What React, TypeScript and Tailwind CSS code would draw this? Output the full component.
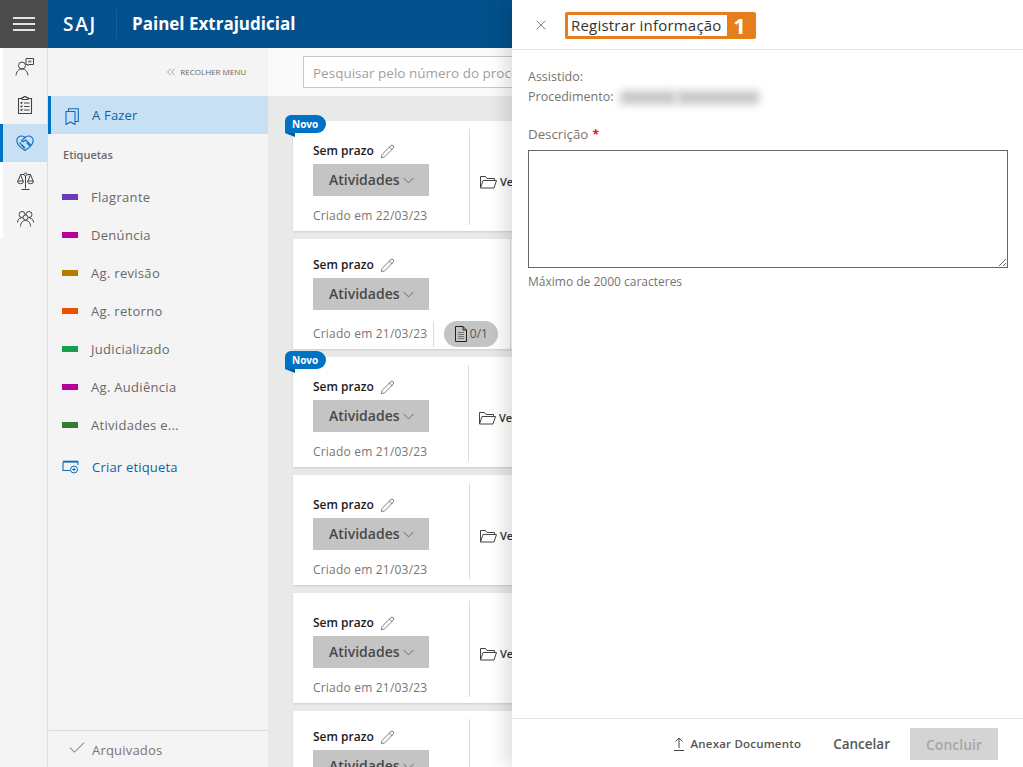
import React from "react";
import { ChevronDown, ChevronsLeft, Check, X, Pencil } from "lucide-react";

const labels = [
  ["Flagrante", "bg-[#6b3bb8]"],
  ["Denúncia", "bg-[#b4009e]"],
  ["Ag. revisão", "bg-[#b97a00]"],
  ["Ag. retorno", "bg-[#ea5000]"],
  ["Judicializado", "bg-[#16a04a]"],
  ["Ag. Audiência", "bg-[#b4009e]"],
  ["Atividades e...", "bg-[#2e7d32]"],
];

function PersonChat() {
  return (
    <svg width="20" height="20" viewBox="0 0 20 20" fill="none" stroke="#444" strokeWidth="1">
      <circle cx="7" cy="8.500" r="3.500" />
      <path d="M1 18.500c.3-3.600 2.600-6.500 6-6.500s5.700 2.900 6 6.500" />
      <path d="M11 1.500h7.500v6H14l-1 1.200V7.500h-2z" />
      <rect x="13" y="3.500" width="3.500" height="2" fill="#888" stroke="none" />
    </svg>
  );
}

function Clipboard() {
  return (
    <svg width="16" height="18" viewBox="0 0 16 18" fill="none" stroke="#444" strokeWidth="1.100">
      <path d="M5 2.500H1.500v15h13v-15H11" />
      <path d="M5 3.500V1.500h1.500a1.500 1 0 0 1 3 0H11v2z" />
      <path d="M3.500 6.500l1 1 1-1.500M3.500 10l1 1 1-1.500M3.500 13.500l1 1 1-1.500M7 7h5.500M7 10.500h5.500M7 14h5.500" />
    </svg>
  );
}

function Handshake() {
  return (
    <svg width="18" height="16" viewBox="0 0 18 16" fill="none" stroke="#0f6cbd" strokeWidth="1.100">
      <path d="M5.500 1C2.800 1 .8 3 .8 5.500c0 2.600 1.600 4.600 3.700 6.700L9 15.500l4.500-3.300c2.100-2.100 3.700-4.100 3.700-6.700C17.200 3 15.200 1 12.500 1 11 1 9.900 1.600 9 2.500 8.100 1.600 7 1 5.500 1z" />
      <path d="M9 2.500L5.500 5.800c.8 1 2 1 3 .2l1.300-1 5 5" />
      <path d="M3.500 7.500l5.500 5.500M5.500 10l3 3M10.500 7.500l3.500 3.500" />
    </svg>
  );
}

function Balance() {
  return (
    <svg width="17" height="18" viewBox="0 0 17 18" fill="none" stroke="#444" strokeWidth="1">
      <circle cx="8.500" cy="2.500" r="1.500" />
      <path d="M8.500 4v12.500M4.500 17.500h8M3.500 2.500H7M10 2.500h3.500" />
      <path d="M3.500 2.500L1 9M3.500 2.500L6 9M13.500 2.500L11 9M13.500 2.500L16 9" />
      <path d="M.5 9h6a3 2.800 0 0 1-6 0zM10.500 9h6a3 2.800 0 0 1-6 0z" />
    </svg>
  );
}

function People() {
  return (
    <svg width="17" height="16" viewBox="0 0 17 16" fill="none" stroke="#444" strokeWidth="1">
      <circle cx="5" cy="3.500" r="3" />
      <circle cx="12" cy="3.500" r="3" />
      <path d="M.5 11.500c0-2.500 1.500-4.500 4-4.500M16.500 11.500c0-2.500-1.500-4.500-4-4.500" />
      <circle cx="8.500" cy="6.500" r="2.500" fill="#f4f4f4" />
      <path d="M3.500 15.500c0-3.500 2-6 5-6s5 2.500 5 6" />
    </svg>
  );
}

function Bookmarks() {
  return (
    <svg width="14" height="17" viewBox="0 0 14 17" fill="none" stroke="#0f6cbd" strokeWidth="1.100">
      <path d="M1 3.500h9v13l-4.500-2.500L1 16.500z" />
      <path d="M3.500 3.500V.8h9.800v12.700H10" />
    </svg>
  );
}

function TagAdd() {
  return (
    <svg width="17" height="14" viewBox="0 0 17 14" fill="none" stroke="#0f6cbd" strokeWidth="1">
      <path d="M1 2h15v3M1 2v8.500h7" strokeWidth="1.100" />
      <path d="M1 1.500h15" strokeWidth="1.600" />
      <circle cx="12" cy="9.500" r="3.500" />
      <path d="M10.300 9.500h3.400M12 7.800v3.400" />
    </svg>
  );
}

function Folder() {
  return (
    <svg width="17" height="14" viewBox="0 0 17 14" fill="none" stroke="#444" strokeWidth="1">
      <path d="M.5 13V1.500h5l1.500 2h7.500v2" />
      <path d="M.5 13l2.500-7.500h13.500L14 13z" />
    </svg>
  );
}

function Doc() {
  return (
    <svg width="12" height="16" viewBox="0 0 12 16" fill="none" stroke="#222" strokeWidth="1">
      <path d="M.5.500h7.500l3.500 3.500v11.500H.5z" />
      <path d="M8 .5v3.500h3.500" />
      <path d="M3 6.500h6M3 8.500h6M3 10.500h6M3 12.500h6" stroke="#777" />
    </svg>
  );
}

function Upload() {
  return (
    <svg width="10" height="14" viewBox="0 0 10 14" fill="none" stroke="#444" strokeWidth="1">
      <path d="M5 11V1M1.500 4.500L5 1l3.500 3.500M0 13.500h10" />
    </svg>
  );
}

function Rail({ active, children }: { active?: boolean; children: React.ReactNode }) {
  return (
    <div className={`h-[38px] flex items-center justify-center border-l-[3px] ${active ? "border-[#0072c6] bg-[#c7e0f4]" : "border-white"}`}>
      {children}
    </div>
  );
}

function Card({ novo, tall, shift, second, date = "21/03/23" }: { novo?: boolean; tall?: boolean; shift?: boolean; second?: boolean; date?: string }) {
  return (
    <div className="relative shrink-0 h-[110px] bg-white shadow-[0_1px_2px_rgba(0,0,0,0.12)] flex">
      {novo && (
        <div className="absolute left-[-8px] top-[-6px]">
          <div className="h-[18px] w-[41px] bg-[#0072c6] rounded-tl-[6px] rounded-r-[9px] text-white text-[10px] font-bold leading-[18px] pl-[7px]">Novo</div>
          <div className="w-0 h-0 border-t-[4px] border-l-[10px] border-t-[#005a9e] border-l-transparent" />
        </div>
      )}
      <div className={`flex flex-col pl-5 pb-[5px] ${tall ? "pt-4" : "pt-5"} ${second ? "w-[218px] border-r border-[#dcdcdc]" : shift ? "w-[175px]" : "w-[176px]"}`}>
        <div className="h-5 flex items-center gap-[6px] text-[12px] font-semibold text-[#1b1b1b]">
          Sem prazo <Pencil size={15} strokeWidth={1} className="text-[#333]" />
        </div>
        <div className="mt-[3px] w-[116px] h-8 bg-[#c4c4c4] flex items-center pl-4 pb-[2px] text-[14px] font-semibold text-[#484848] shrink-0">
          Atividades <ChevronDown size={19} strokeWidth={1} className="ml-[-1px] mt-[2px] text-[#555]" />
        </div>
        <div className="mt-auto h-5 flex items-center text-[12px] tracking-[0.2px] text-[#7a7574] whitespace-nowrap">
          Criado em {date}
          {second && (
            <div className="flex items-center ml-[6px] tracking-normal">
              <div className="h-[26px] w-px bg-[#dcdcdc]" />
              <div className="ml-[10px] h-[26px] w-[54px] rounded-full bg-[#c4c4c4] flex items-center justify-center gap-[3px] text-[#555]">
                <Doc />0/1
              </div>
            </div>
          )}
        </div>
      </div>
      {!second && (
        <div className={`my-2 flex items-center gap-[3px] border-l border-[#dcdcdc] pl-[10px] h-[96px] text-[11px] font-semibold text-[#333] ${tall ? "pt-[16px]" : "pt-[10px]"}`}>
          <Folder /> Ver
        </div>
      )}
    </div>
  );
}

export default function App() {
  return (
    <div className="relative h-[767px] w-[1023px] overflow-hidden flex flex-col bg-[#f4f4f4] font-['Open_Sans',sans-serif]">
      <header className="h-12 shrink-0 bg-[#03508c] flex items-center text-white">
        <div className="w-12 h-12 bg-[#4b4b4b] flex flex-col items-center justify-center gap-[4px]">
          <div className="w-[22px] h-[2px] bg-[#e4e4e4]" />
          <div className="w-[22px] h-[2px] bg-[#e4e4e4]" />
          <div className="w-[22px] h-[2px] bg-[#e4e4e4]" />
        </div>
        <div className="ml-[15px] text-[19px] font-semibold tracking-[1.800px] w-[38px]">SAJ</div>
        <div className="ml-[15px] w-px h-[30px] bg-[#0f62a5]" />
        <div className="ml-[15px] text-[17px] font-bold">Painel Extrajudicial</div>
      </header>

      <div className="flex-1 flex min-h-0">
        <nav className="w-12 shrink-0 border-r border-[#dcdcdc] bg-[#f4f4f4]">
          <Rail><PersonChat /></Rail>
          <Rail><Clipboard /></Rail>
          <Rail active><Handshake /></Rail>
          <Rail><Balance /></Rail>
          <Rail><People /></Rail>
        </nav>

        <aside className="w-[220px] shrink-0 flex flex-col bg-[#f4f4f4]">
          <div className="h-12 flex items-center justify-end gap-[2px] pr-[22px] text-[8px] text-[#666]">
            <ChevronsLeft size={14} strokeWidth={1} /> RECOLHER MENU
          </div>
          <div className="h-[38px] flex items-center border-l-[3px] border-[#0072c6] bg-[#c7e0f4] pl-[14px] pt-[2px] text-[13px] tracking-[0.2px] text-[#0f5fa8]">
            <Bookmarks /> <span className="ml-[13px]">A Fazer</span>
          </div>
          <div className="mt-[12px] pl-[15px] text-[11px] font-semibold text-[#6f6a68] h-[18px] flex items-center">Etiquetas</div>
          <div className="mt-[14px] flex flex-col">
            {labels.map(([name, color]) => (
              <div key={name} className="h-[38px] flex items-center pl-[14px] text-[13px] tracking-[0.3px] text-[#6b6866]">
                <div className={`w-4 h-[6px] ${color}`} />
                <span className="ml-[13px] mt-[2px]">{name}</span>
              </div>
            ))}
          </div>
          <div className="mt-[4px] h-[38px] flex items-center pl-[14px] text-[13px] tracking-[0.2px] text-[#0f5fa8]">
            <TagAdd /> <span className="ml-[13px] mt-[2px]">Criar etiqueta</span>
          </div>
          <div className="mt-auto h-[37px] ml-px border-t border-[#dcdcdc] flex items-center pl-[18px] text-[13px] tracking-[0.2px] text-[#7a7574]">
            <Check size={20} strokeWidth={1} className="text-[#444] mt-[-3px]" /> <span className="ml-[5px] mt-[3px]">Arquivados</span>
          </div>
        </aside>

        <main className="flex-1 min-w-0 bg-[#e9e9e9] overflow-hidden flex flex-col">
          <div className="h-12 shrink-0 bg-[#fafafa] flex items-center pl-[35px]">
            <div className="w-[600px] h-8 border border-[#c8c8c8] bg-white flex items-center pl-[9px] pt-[2px] text-[13.500px] text-[#a19f9d] whitespace-nowrap">
              Pesquisar pelo número do processo
            </div>
          </div>
          <div className="flex flex-col gap-2 pt-[25px] pl-[25px]">
            <Card novo date="22/03/23" />
            <Card tall second />
            <Card novo shift />
            <Card />
            <Card />
            <Card tall />
          </div>
        </main>
      </div>

      <section className="absolute right-0 top-0 bottom-0 w-[511px] bg-white shadow-[-8px_0_16px_rgba(0,0,0,0.12)] flex flex-col">
        <div className="h-[50px] shrink-0 border-b border-[#e6e6e6] flex items-center pl-[21px]">
          <X size={16} strokeWidth={1} className="text-[#444]" />
          <div className="ml-[16px] mt-[1px] flex items-stretch h-[27px] border-[3px] border-[#e67e1b] rounded-[2px]">
            <div className="pl-[3px] pr-[5px] flex items-center text-[15px] tracking-[0.2px] text-[#333] whitespace-nowrap">Registrar informação</div>
            <div className="w-[26px] bg-[#e67e1b] text-white text-[22px] font-bold leading-[20px] flex items-center justify-center">1</div>
          </div>
        </div>
        <div className="px-4 flex-1 text-[#767372]">
          <div className="mt-[17px] h-5 text-[12.500px] flex items-center">Assistido:</div>
          <div className="h-5 text-[12.500px] flex items-center">
            Procedimento:
            <div className="ml-[7px] flex gap-px">
              <div className="w-[56px] h-[13px] bg-[#c4c4c4] blur-[4px]" />
              <div className="w-[82px] h-[13px] bg-[#c4c4c4] blur-[4px]" />
            </div>
          </div>
          <div className="mt-[18px] h-5 text-[13.300px] flex items-center">
            Descrição <span className="ml-1 text-[#e81123] font-bold text-[12px]">*</span>
          </div>
          <textarea className="mt-[5px] block w-[480px] h-[118px] border border-[#666] outline-none" />
          <div className="mt-[5px] h-[18px] text-[12px] flex items-center">Máximo de 2000 caracteres</div>
        </div>
        <div className="h-[49px] shrink-0 border-t border-[#e6e6e6] flex items-center justify-end pr-[25px] pt-[2px]">
          <div className="flex items-center gap-[7px] text-[11.500px] tracking-[0.2px] font-semibold text-[#555]"><Upload /> Anexar Documento</div>
          <div className="ml-[32px] text-[13.500px] font-semibold text-[#555]">Cancelar</div>
          <div className="ml-[20px] w-[88px] h-8 bg-[#d4d4d4] flex items-center justify-center text-[14px] font-semibold text-[#a6a6a6]">Concluir</div>
        </div>
      </section>
    </div>
  );
}
